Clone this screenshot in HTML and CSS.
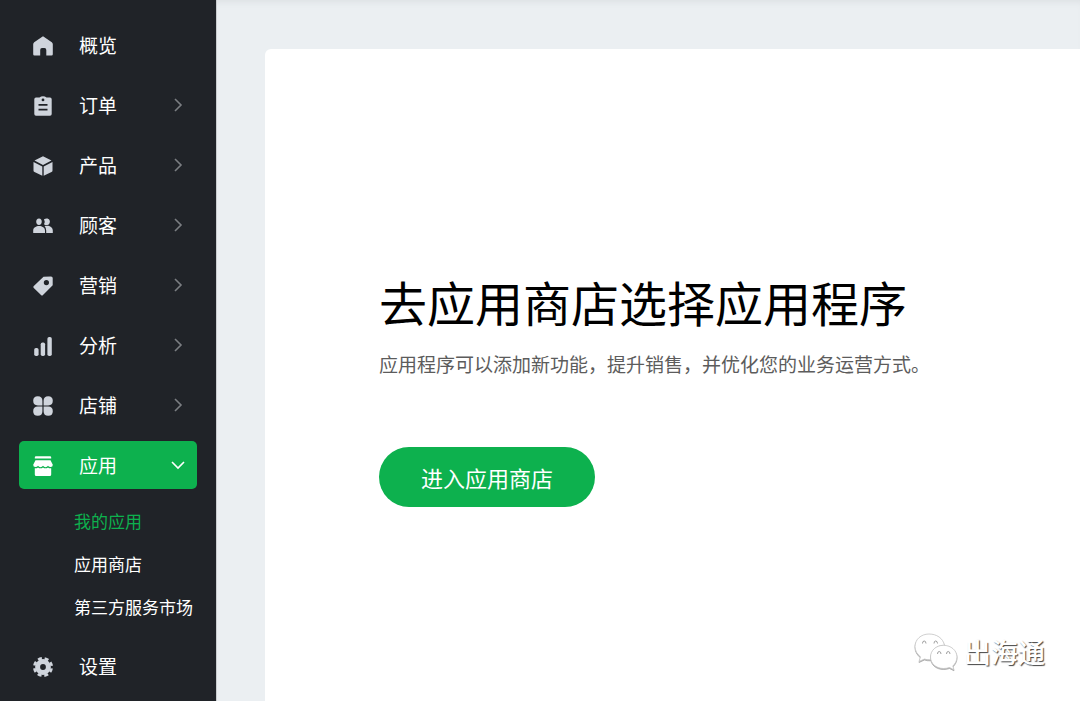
FILE: index.html
```html
<!DOCTYPE html>
<html lang="zh-CN">
<head>
    <meta charset="UTF-8">
    <meta name="viewport" content="width=device-width, initial-scale=1.0">
    <title>我的应用</title>
    <link rel="stylesheet" href="styles.css">
</head>
<body>
    <div class="layout">
        <nav class="sidebar">
            <a class="nav-item" href="#">
                <svg class="icon" viewBox="0 0 20 20"><path d="M10 0.3 18.8 6.2Q19.8 7 19.8 8.2V18.2Q19.8 19.5 18.5 19.5H13.3V14Q13.3 12 11.5 12H9Q7.2 12 7.2 14V19.5H1.5Q0.2 19.5 0.2 18.2V8.2Q0.2 7 1.2 6.2Z"/></svg>
                <span>概览</span>
            </a>
            <a class="nav-item" href="#">
                <svg class="icon" viewBox="0 0 20 20"><path fill-rule="evenodd" d="M3 1.5H6.5Q8 0.3 10 0.3T13.5 1.5H17Q18.7 1.5 18.7 3.2V18Q18.7 19.8 17 19.8H3Q1.3 19.8 1.3 18V3.2Q1.3 1.5 3 1.5ZM10 2.5A1.4 1.4 0 1 0 10 5.3 1.4 1.4 0 1 0 10 2.5ZM5.5 8V9.7H14.5V8ZM5.5 12.8V14.5H14.5V12.8Z"/></svg>
                <span>订单</span>
                <svg class="arrow" viewBox="0 0 14 14"><path d="M4 1 10 7 4 13"/></svg>
            </a>
            <a class="nav-item" href="#">
                <svg class="icon" viewBox="0 0 20 20"><path d="M10 0.2 18.5 4.5 10 8.9 1.5 4.5ZM0.5 6 9.3 10.4V19.8L1.5 16Q0.5 15.5 0.5 14.4ZM19.5 6V14.4Q19.5 15.5 18.5 16L10.7 19.8V10.4Z"/></svg>
                <span>产品</span>
                <svg class="arrow" viewBox="0 0 14 14"><path d="M4 1 10 7 4 13"/></svg>
            </a>
            <a class="nav-item" href="#">
                <svg class="icon" viewBox="0 0 20 20"><path d="M6 2.6C9.8 2.6 9.6 9 6 9S2.2 2.6 6 2.6ZM0.2 17V14.5C0.2 8.4 12 8.4 12 14.5V17ZM11 3.2C15 1 18 4 16.5 7.2 15.3 9.8 12.2 9.3 11 8.2Q12.4 5.6 11 3.2ZM11.6 10C15.5 9 19.8 10.6 19.8 14.5V17H13.2V14.5Q13.2 12 11.6 10Z"/></svg>
                <span>顾客</span>
                <svg class="arrow" viewBox="0 0 14 14"><path d="M4 1 10 7 4 13"/></svg>
            </a>
            <a class="nav-item" href="#">
                <svg class="icon" viewBox="0 0 20 20"><path fill-rule="evenodd" d="M10.5 0.7 18 0.4Q19.7 0.4 19.7 2V9.3L10 19.1Q9 20.1 8 19.1L0.8 12Q-0.1 11 0.8 10ZM13.4 4A2.6 2.6 0 1 0 13.4 9.2 2.6 2.6 0 1 0 13.4 4Z"/></svg>
                <span>营销</span>
                <svg class="arrow" viewBox="0 0 14 14"><path d="M4 1 10 7 4 13"/></svg>
            </a>
            <a class="nav-item" href="#">
                <svg class="icon" viewBox="0 0 20 20"><rect x="1.2" y="12" width="4.4" height="8" rx="1.8"/><rect x="7.7" y="6.5" width="4.4" height="13.5" rx="1.8"/><rect x="14.4" y="1" width="4.4" height="19" rx="1.8"/></svg>
                <span>分析</span>
                <svg class="arrow" viewBox="0 0 14 14"><path d="M4 1 10 7 4 13"/></svg>
            </a>
            <a class="nav-item" href="#">
                <svg class="icon" viewBox="0 0 20 20"><path d="M4.8 0.2Q9.4 0.2 9.4 4.8V9.4H4.8Q0.2 9.4 0.2 4.8T4.8 0.2ZM15.2 0.2Q19.8 0.2 19.8 4.8T15.2 9.4H10.6V4.8Q10.6 0.2 15.2 0.2ZM4.8 10.6H9.4V15.2Q9.4 19.8 4.8 19.8T0.2 15.2 4.8 10.6ZM10.6 10.6H15.2Q19.8 10.6 19.8 15.2T15.2 19.8 10.6 15.2Z"/></svg>
                <span>店铺</span>
                <svg class="arrow" viewBox="0 0 14 14"><path d="M4 1 10 7 4 13"/></svg>
            </a>
            <a class="nav-item active" href="#">
                <svg class="icon" viewBox="0 0 20 20"><path d="M3 0.3H17Q18.2 0.3 18.2 1.6V2.4H1.8V1.6Q1.8 0.3 3 0.3ZM2.5 4.2H17.5L19.8 8.8Q19.8 11 17.7 11 15.8 11 15 9.8 14 11.2 12.5 11.2T10 9.8Q9 11.2 7.5 11.2T5 9.8Q4.2 11 2.3 11 0.2 11 0.2 8.8ZM1.8 12.2Q3.8 12.5 5 11.4 7.4 13.2 10 11.4 12.6 13.2 15 11.4 16.2 12.5 18.2 12.2V18.5Q18.2 20 16.8 20H3.2Q1.8 20 1.8 18.5Z"/></svg>
                <span>应用</span>
                <svg class="arrow" viewBox="0 0 14 14"><path d="M1 4 7 10 13 4"/></svg>
            </a>
            <div class="submenu">
                <a class="current" href="#">我的应用</a>
                <a href="#">应用商店</a>
                <a href="#">第三方服务市场</a>
            </div>
            <a class="nav-item" href="#">
                <svg class="icon gear" viewBox="0 0 20 20"><circle cx="10" cy="10" r="5.4" stroke-width="5"/><circle cx="10" cy="10" r="8.7" stroke-width="2.6" stroke-dasharray="4 2.83" stroke-dashoffset="-1.42"/></svg>
                <span>设置</span>
            </a>
        </nav>

        <main class="content">
            <section class="card">
                <h1>去应用商店选择应用程序</h1>
                <p>应用程序可以添加新功能，提升销售，并优化您的业务运营方式。</p>
                <button class="store-btn" type="button">进入应用商店</button>
            </section>
        </main>

        <div class="watermark">
            <svg viewBox="0 0 44 38">
                <path d="M15 1C7 1 1 6.5 1 13.5 1 18 3.5 21.5 6.5 23.8L5 28.5 10.5 26Q13 27 16.5 26.8C16 18 23 12 30.5 12.3 29 5 22.5 1 15 1Z"/>
                <path d="M29.5 12.3C22 12.3 16.5 17.5 16.5 24S22 35.5 29.5 35.5Q32.5 35.5 35.5 34.5L40 36.8 38.8 33C41 31 43 28 43 24 43 17.5 37 12.3 29.5 12.3Z"/>
                <path class="eye" d="M8.5 10.5Q8.5 8 10.2 8T12 10.5M20 10.5Q20 8 21.7 8T23.5 10.5M23.5 21Q23.5 18.5 25.2 18.5T27 21M32.5 21Q32.5 18.5 34.2 18.5T36 21"/>
            </svg>
            <span>出海通</span>
        </div>
    </div>
</body>
</html>
```

FILE: styles.css
```css
* {
    box-sizing: border-box;
}
body {
    margin: 0;
    font-family: "Noto Sans CJK SC", sans-serif;
    background: #ebeff2;
}
a {
    text-decoration: none;
}
.layout {
    display: flex;
    position: relative;
    min-height: 100vh;
}
.sidebar {
    display: flex;
    flex-direction: column;
    flex: none;
    gap: 12px;
    width: 217px;
    padding: 21px 19px 11px;
    background: #202328;
    border-right: 1px solid #c9cccf;
}
.nav-item {
    display: flex;
    align-items: center;
    height: 48px;
    padding: 0 12px 0 14px;
    border-radius: 5px;
    color: #fff;
    font-size: 19px;
}
.nav-item span {
    padding-bottom: 2px;
}
.icon {
    width: 20px;
    height: 20px;
    margin: 2px 26px 0 0;
    fill: #cfd4dc;
}
.gear {
    fill: none;
    stroke: #cfd4dc;
}
.arrow {
    width: 14px;
    height: 14px;
    margin-left: auto;
    fill: none;
    stroke: #7b7e82;
    stroke-width: 1.6;
}
.active {
    background: #0db14e;
}
.active .icon {
    fill: #fff;
}
.active .arrow {
    stroke: #fff;
}
.submenu {
    display: flex;
    flex-direction: column;
    gap: 4px;
    padding: 0 0 4px 55px;
}
.submenu a {
    color: #fff;
    font-size: 17px;
    line-height: 39px;
    white-space: nowrap;
}
.submenu .current {
    color: #0db14e;
}
.content {
    display: flex;
    flex: 1;
    padding: 49px 0 0 48px;
    box-shadow: inset 0 6px 6px -4px #dce0e3;
}
.card {
    flex: 1;
    padding: 220px 40px 40px 114px;
    background: #fff;
    border-radius: 6px 0 0 0;
}
.card h1 {
    margin: 0 0 17px;
    color: #000;
    font-size: 48px;
    font-weight: 400;
    line-height: 64px;
}
.card p {
    margin: 0 0 69px;
    color: #5c5c5c;
    font-size: 19px;
    line-height: 28px;
}
.store-btn {
    height: 60px;
    padding: 0 42px;
    border: none;
    border-radius: 30px;
    background: #0db14e;
    color: #fff;
    font-family: inherit;
    font-size: 22px;
    cursor: pointer;
}
.watermark {
    display: flex;
    align-items: center;
    gap: 6px;
    position: absolute;
    right: 35px;
    bottom: 29px;
    color: #fff;
    font-size: 27px;
    font-weight: 500;
    line-height: 40px;
    text-shadow: 1px 1px 1px #444;
}
.watermark svg {
    width: 44px;
    height: 38px;
    fill: #fff;
    stroke: #c4c4c4;
    stroke-width: 0.8;
    filter: drop-shadow(0 1px 0 #aaa);
}
.watermark .eye {
    fill: none;
    stroke: #888;
}
```
